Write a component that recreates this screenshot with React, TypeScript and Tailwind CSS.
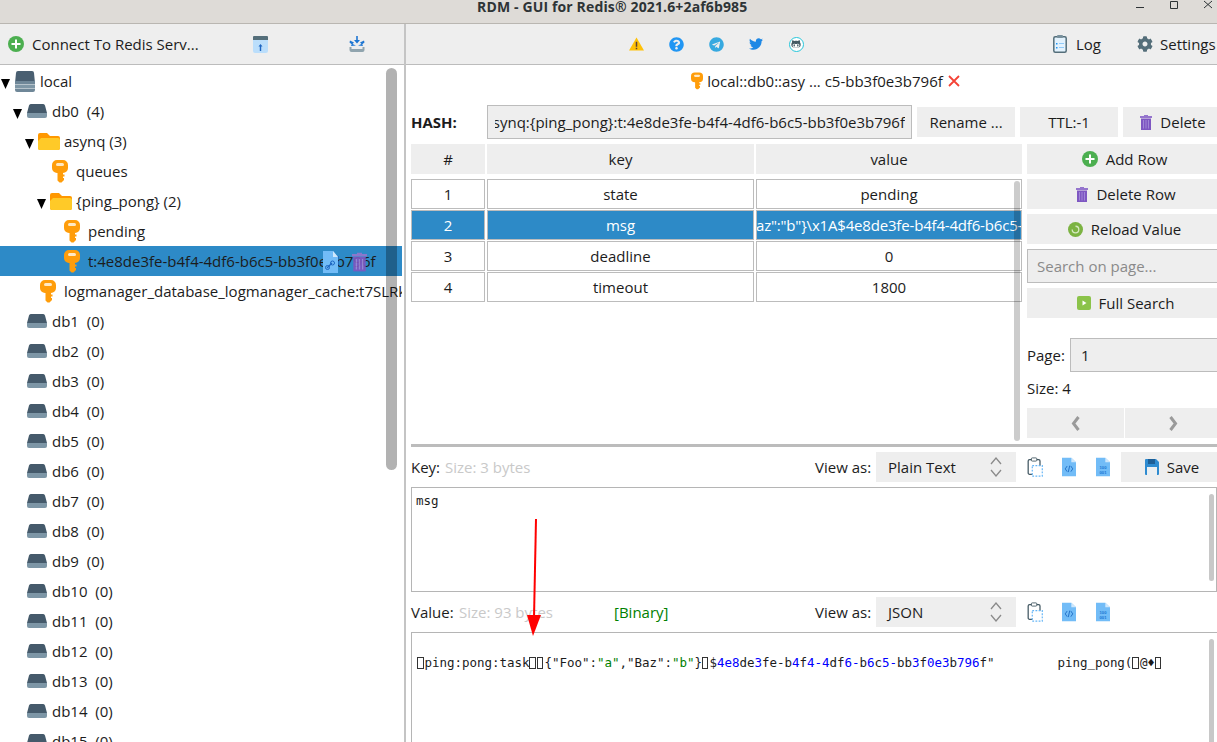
import React from 'react';
import { FaCog, FaGithubAlt, FaQuestionCircle, FaTelegram, FaTwitter } from 'react-icons/fa';

// ---- icons ----
const KeyIcon = ({ className = 'w-[16px] h-[23px]' }: { className?: string }) => (
    <svg viewBox="0 0 16 23" className={`shrink-0 ${className}`}>
        <path d="M5 0h6a5 5 0 0 1 5 5v3a5 5 0 0 1-5 5v1.5h1.5v2H11v1.5h1v2l-2.5 2.5h-2L5.5 20.5V13H5a5 5 0 0 1-5-5V5a5 5 0 0 1 5-5z" fill="#ff9d0a" />
        <rect x="4" y="3" width="8" height="3" rx="1.5" fill="#ffe9c4" />
    </svg>
);

const ServerIcon = () => (
    <svg viewBox="0 0 20 21" className="w-[20px] h-[21px] ml-[2px] shrink-0">
        <path d="M3 0h14a2 2 0 0 1 2 2l1 10H0L1 2a2 2 0 0 1 2-2z" fill="#4a5f71" />
        <rect x="0" y="10" width="20" height="3.5" fill="#6f8798" />
        <rect x="0" y="14" width="20" height="3" fill="#7f97a6" />
        <path d="M0 17.5h20V19a2 2 0 0 1-2 2H2a2 2 0 0 1-2-2z" fill="#6f8798" />
    </svg>
);

const DbIcon = () => (
    <svg viewBox="0 0 20 14" className="w-[20px] h-[14px] ml-[2px] shrink-0">
        <path d="M4 0h12a2 2 0 0 1 2 1.5L20 9H0l2-7.5A2 2 0 0 1 4 0z" fill="#455a6b" />
        <path d="M0 9h20v3a2 2 0 0 1-2 2H2a2 2 0 0 1-2-2z" fill="#7d96a6" />
    </svg>
);

const FolderIcon = () => (
    <svg viewBox="0 0 22 17" className="w-[22px] h-[17px] ml-[1px] shrink-0">
        <path d="M2 0h7l3 3h8a2 2 0 0 1 2 2v10a2 2 0 0 1-2 2H2a2 2 0 0 1-2-2V2a2 2 0 0 1 2-2z" fill="#ff9800" />
        <path d="M3 5h17a2 2 0 0 1 2 2v8a2 2 0 0 1-2 2H2a2 2 0 0 1-2-2V8z" fill="#ffca28" />
    </svg>
);

const AddIcon = () => (
    <svg viewBox="0 0 16 16" className="w-[16px] h-[16px] shrink-0">
        <circle cx="8" cy="8" r="8" fill="#4caf50" />
        <path d="M7 3.5h2V7h3.5v2H9v3.5H7V9H3.5V7H7z" fill="#fff" />
    </svg>
);

const TrashIcon = ({ className = 'w-[12px] h-[15px]' }: { className?: string }) => (
    <svg viewBox="0 0 12 15" className={`shrink-0 ${className}`}>
        <path d="M4 0h4v1h4v2H0V1h4z" fill="#9575cd" />
        <path d="M1 3.5h10V15H1z" fill="#7e57c2" />
        <path d="M3 5h1v8.500H3zM5.500 5h1v8.500h-1zM8 5h1v8.500H8z" fill="#9f86d6" />
    </svg>
);

const ImportIcon = () => (
    <svg viewBox="0 0 15 17" className="w-[15px] h-[17px]">
        <path d="M1 0h13a1 1 0 0 1 1 1v3H0V1a1 1 0 0 1 1-1z" fill="#546e7a" />
        <path d="M0 4h15v11a2 2 0 0 1-2 2H2a2 2 0 0 1-2-2z" fill="#bbdefb" />
        <path d="M7.500 8l2 2.500H8.200V15H6.800v-4.500H5.500z" fill="#1e66c2" />
    </svg>
);

const ExportIcon = () => (
    <svg viewBox="0 0 16 16" className="w-[16px] h-[16px]">
        <path d="M7.200 0h1.600v4H11L8 7.500 5 4h2.200z" fill="#1e76d2" />
        <path d="M1 4.500l4 2-1.500 1.500L7 9.500l-5 .6.700-1.800L.5 6.500zM15 4.500l-4 2 1.500 1.500L9 9.500l5 .6-.7-1.800 2.200-1.800z" fill="#1e76d2" />
        <path d="M.5 11h2v2h11v-2h2v3a2 2 0 0 1-2 2h-11a2 2 0 0 1-2-2z" fill="#90a4ae" />
    </svg>
);

const WarnIcon = () => (
    <svg viewBox="0 0 16 14" className="w-[15px] h-[14px]">
        <path d="M8 0l8 14H0z" fill="#ffc107" />
        <path d="M7.200 4.500h1.600V10H7.200zM7.200 11h1.600v1.500H7.200z" fill="#5d4037" />
    </svg>
);

const GithubIcon = () => (
    <div className="w-[15px] h-[15px] rounded-full border-[1.5px] border-[#26c6da] flex items-center justify-center bg-white">
        <FaGithubAlt className="w-[10px] h-[10px] text-[#455a64]" />
    </div>
);

const LogIcon = () => (
    <svg viewBox="0 0 14 18" className="w-[14px] h-[18px] shrink-0">
        <rect x="0.800" y="1.800" width="12.400" height="15.400" rx="1.500" fill="#e3f2fd" stroke="#546e7a" strokeWidth="1.500" />
        <rect x="4" y="0" width="6" height="3" rx="1" fill="#78909c" />
        <path d="M3 8h1.500v1.500H3zM3 12h1.500v1.500H3z" fill="#2196f3" />
        <path d="M6 8h5v1H6zM6 12h5v1H6z" fill="#90caf9" />
    </svg>
);

const ReloadIcon = () => (
    <svg viewBox="0 0 16 16" className="w-[15px] h-[15px] shrink-0">
        <circle cx="8" cy="8" r="8" fill="#7cb342" />
        <path d="M4.500 8a3.500 3.500 0 1 0 3.500-3.500" fill="none" stroke="#d7e9c0" strokeWidth="1.400" />
    </svg>
);

const PlayIcon = () => (
    <svg viewBox="0 0 14 14" className="w-[14px] h-[14px] shrink-0">
        <rect width="14" height="14" rx="2" fill="#8bc34a" />
        <path d="M5.500 4.500L9.500 7l-4 2.500z" fill="#fff" />
    </svg>
);

const SaveIcon = () => (
    <svg viewBox="0 0 14 16" className="w-[14px] h-[16px] shrink-0">
        <path d="M1 0h10l3 3v12a1 1 0 0 1-1 1H1a1 1 0 0 1-1-1V1a1 1 0 0 1 1-1z" fill="#2e8bd0" />
        <rect x="3" y="0" width="7" height="5" fill="#1e5f96" />
        <rect x="2" y="8" width="10" height="8" fill="#eceff1" />
    </svg>
);

const ClipboardIcon = () => (
    <svg viewBox="0 0 17 22" className="w-[16px] h-[20px]">
        <rect x="1" y="3" width="13" height="16" rx="1.500" fill="none" stroke="#455a64" strokeWidth="1.400" />
        <rect x="4.500" y="1" width="6" height="3.500" rx="1" fill="#fff" stroke="#455a64" />
        <rect x="5.500" y="9.500" width="11" height="11.500" fill="#fff" stroke="#64b5f6" strokeWidth="1.300" strokeDasharray="2 1.500" />
    </svg>
);

const PageIcon = ({ children }: { children: React.ReactNode }) => (
    <svg viewBox="0 0 15 20" className="w-[14px] h-[20px]">
        <path d="M0 0h10l5 5v15H0z" fill="#72bcf7" />
        <path d="M10 0l5 5h-5z" fill="#cfe8fc" />
        {children}
    </svg>
);

const FileLinkIcon = () => (
    <svg viewBox="0 0 15 22" className="w-[15px] h-[22px]">
        <path d="M0 0h10l5 6v16H0z" fill="#72bcf7" />
        <path d="M10 0l5 6h-5z" fill="#cfe8fc" />
        <path d="M4 17l5-5" stroke="#1e66c2" strokeWidth="1.200" />
        <circle cx="4.500" cy="16.500" r="2" fill="none" stroke="#1e66c2" />
        <circle cx="9.500" cy="12" r="2" fill="none" stroke="#1e66c2" />
    </svg>
);

const Chevron = ({ flip = false }: { flip?: boolean }) => (
    <svg viewBox="0 0 9 15" className={`w-[9px] h-[15px] ${flip ? 'rotate-180' : ''}`}>
        <path d="M7.500 1L2.500 7.500l5 6.500" fill="none" stroke="#9a9a9a" strokeWidth="3" />
    </svg>
);

const UpDown = () => (
    <svg viewBox="0 0 12 20" className="w-[12px] h-[20px] shrink-0">
        <path d="M1 7l5-6 5 6M1 13l5 6 5-6" fill="none" stroke="#8a8a8a" strokeWidth="1.300" />
    </svg>
);

// ---- tree ----
type Row = { label: string; depth: 0 | 1 | 2 | 3 | 4; icon: 'server' | 'db' | 'folder' | 'key'; open?: boolean; selected?: boolean };

const depthClass = ['pl-[1px]', 'pl-[13px]', 'pl-[25px]', 'pl-[37px]', 'pl-[49px]'];

const rows: Row[] = [
    { label: 'local', depth: 0, icon: 'server', open: true },
    { label: 'db0  (4)', depth: 1, icon: 'db', open: true },
    { label: 'asynq (3)', depth: 2, icon: 'folder', open: true },
    { label: 'queues', depth: 3, icon: 'key' },
    { label: '{ping_pong} (2)', depth: 3, icon: 'folder', open: true },
    { label: 'pending', depth: 4, icon: 'key' },
    { label: 't:4e8de3fe-b4f4-4df6-b6c5-bb3f0e3b796f', depth: 4, icon: 'key', selected: true },
    { label: 'logmanager_database_logmanager_cache:t7SLRkQwZp', depth: 2, icon: 'key' },
    ...Array.from({ length: 15 }, (_, i): Row => ({ label: `db${i + 1}  (0)`, depth: 1, icon: 'db' })),
];

const TreeRow = ({ row }: { row: Row }) => (
    <div className={`relative flex h-[30px] shrink-0 items-center overflow-hidden whitespace-pre ${depthClass[row.depth]} ${row.selected ? 'bg-[#2d8ac7]' : ''}`}>
        <div className="w-[12px] shrink-0 mt-[6px]">
            {row.open && (
                <svg viewBox="0 0 9 10" className="w-[9px] h-[10px]">
                    <path d="M0 0h9L4.500 10z" fill="#000" />
                </svg>
            )}
        </div>
        <div className="w-[27px] shrink-0 flex items-center">
            {row.icon === 'server' && <ServerIcon />}
            {row.icon === 'db' && <DbIcon />}
            {row.icon === 'folder' && <FolderIcon />}
            {row.icon === 'key' && <KeyIcon className="w-[16px] h-[23px] ml-[3px]" />}
        </div>
        <span>{row.label}</span>
        {row.selected && (
            <>
                <div className="absolute left-[323px] top-[5px]"><FileLinkIcon /></div>
                <div className="absolute left-[352px] top-[6px] opacity-90"><TrashIcon className="w-[15px] h-[20px]" /></div>
            </>
        )}
    </div>
);

// ---- right side pieces ----
const Btn = ({ className = '', icon, children }: { className?: string; icon?: React.ReactNode; children: React.ReactNode }) => (
    <div className={`flex items-center justify-center gap-[8px] bg-[#eeeeee] shrink-0 whitespace-nowrap ${className}`}>
        {icon}
        <span>{children}</span>
    </div>
);

const Cell = ({ className = '', children }: { className?: string; children: React.ReactNode }) => (
    <div className={`flex items-center justify-center border border-[#bcbcbc] h-[30px] overflow-hidden whitespace-nowrap ${className}`}>{children}</div>
);

const tableRows = [
    ['1', 'state', 'pending'],
    ['2', 'msg', ''],
    ['3', 'deadline', '0'],
    ['4', 'timeout', '1800'],
];

const FormatIcons = () => (
    <div className="flex items-center ml-[2px] shrink-0">
        <div className="w-[34px] flex justify-center shrink-0"><ClipboardIcon /></div>
        <div className="w-[34px] flex justify-center shrink-0">
            <PageIcon>
                <path d="M5.500 9L3.500 12l2 3M9.500 9l2 3-2 3M8.300 8.500L6.700 15.500" fill="none" stroke="#1565c0" strokeWidth="0.900" />
            </PageIcon>
        </div>
        <div className="w-[34px] flex justify-center shrink-0">
            <PageIcon>
                <text x="7.500" y="12" textAnchor="middle" fontSize="4.500" fontWeight="700" fill="#1976d2" fontFamily="Liberation Sans, sans-serif">100</text>
                <text x="7.500" y="17" textAnchor="middle" fontSize="4.500" fontWeight="700" fill="#1976d2" fontFamily="Liberation Sans, sans-serif">001</text>
            </PageIcon>
        </div>
    </div>
);

const ViewAs = ({ value }: { value: string }) => (
    <>
        <div className="w-[61px] shrink-0">View as:</div>
        <div className="w-[140px] h-[30px] shrink-0 bg-[#eeeeee] flex items-center justify-between pl-[12px] pr-[14px]">
            <span>{value}</span>
            <UpDown />
        </div>
    </>
);

const Tofu = () => (
    <span className="inline-block w-[6.500px] h-[12px] mr-[1px] border border-[#333] align-[-2px]" />
);

const blue = 'text-[#0000ff]';
const green = 'text-[#008000]';

const idParts: [string, string][] = [
    ['4e8', blue], ['de', ''], ['3', blue], ['fe-b', ''], ['4', blue], ['f', ''], ['4-4', blue], ['df', ''],
    ['6-', blue], ['b', ''], ['6', blue], ['c', ''], ['5-', blue], ['bb', ''], ['3', blue], ['f', ''],
    ['0e3', blue], ['b', ''], ['796', blue], ['f"', ''],
];

const App: React.FC = () => {
    return (
        <div className="relative w-[1217px] h-[742px] overflow-hidden flex flex-col bg-white text-[#1c1c1c] text-[15px] leading-[20px] font-['Open_Sans',sans-serif]">
            {/* title bar */}
            <div className="h-[24px] shrink-0 flex items-start justify-between bg-[#dedbd7] border-b border-[#b9b6b1]">
                <div className="pl-[477px] text-[14px] leading-[13px] tracking-[0.140px] font-bold text-[#2e3436] whitespace-nowrap">RDM - GUI for Redis® 2021.6+2af6b985</div>
                <div className="flex items-start text-[#2e3436]">
                    <svg viewBox="0 0 8 10" className="w-[8px] h-[10px]"><path d="M0 7h8v1H0z" fill="#2e3436" /></svg>
                    <svg viewBox="0 0 8 10" className="w-[8px] h-[10px] ml-[26px]"><path d="M.5 1.500h7v7h-7z" fill="none" stroke="#2e3436" /></svg>
                    <svg viewBox="0 0 8 10" className="w-[8px] h-[10px] ml-[26px] mr-[5px]"><path d="M0 1l8 7M8 1L0 8" fill="none" stroke="#2e3436" /></svg>
                </div>
            </div>

            <div className="flex flex-1 min-h-0">
                {/* left panel */}
                <div className="w-[404px] shrink-0 flex flex-col">
                    <div className="h-[41px] shrink-0 flex items-center bg-[#eeeeee] border-b border-[#bcbcbc]">
                        <div className="w-[211px] flex items-center gap-[8px] pl-[8px] whitespace-nowrap">
                            <AddIcon />
                            <span>Connect To Redis Serv...</span>
                        </div>
                        <div className="w-[98px] flex justify-center"><ImportIcon /></div>
                        <div className="w-[95px] flex justify-center"><ExportIcon /></div>
                    </div>
                    <div className="relative flex-1 min-h-0 overflow-hidden pr-[2px] pt-[1px]">
                        {rows.map((row) => (
                            <TreeRow key={row.label} row={row} />
                        ))}
                        <div className="absolute left-[386px] top-[3px] w-[11px] h-[402px] rounded-full bg-black/30" />
                    </div>
                </div>

                {/* right panel */}
                <div className="flex-1 min-w-0 flex flex-col border-l-2 border-[#c4c4c4] overflow-hidden">
                    <div className="h-[41px] shrink-0 flex items-center bg-[#eeeeee] border-b border-[#bcbcbc] whitespace-nowrap">
                        <div className="w-[210px] shrink-0" />
                        <div className="w-[40px] flex justify-center shrink-0"><WarnIcon /></div>
                        <div className="w-[40px] flex justify-center shrink-0"><FaQuestionCircle className="w-[15px] h-[15px] text-[#2196f3]" /></div>
                        <div className="w-[40px] flex justify-center shrink-0"><FaTelegram className="w-[15px] h-[15px] text-[#37a9e0]" /></div>
                        <div className="w-[40px] flex justify-center shrink-0"><FaTwitter className="w-[14px] h-[14px] text-[#1e88e5]" /></div>
                        <div className="w-[40px] flex justify-center shrink-0"><GithubIcon /></div>
                        <div className="w-[237px] shrink-0" />
                        <div className="w-[84px] shrink-0 flex items-center gap-[9px]">
                            <LogIcon />
                            <span>Log</span>
                        </div>
                        <div className="flex items-center gap-[7px]">
                            <FaCog className="w-[16px] h-[16px] text-[#546e7a]" />
                            <span>Settings</span>
                        </div>
                    </div>

                    <div className="h-[32px] shrink-0 flex items-center justify-center pl-[28px] gap-[4px] whitespace-nowrap">
                        <KeyIcon className="w-[12px] h-[18px]" />
                        <span>local::db0::asy ... c5-bb3f0e3b796f</span>
                        <svg viewBox="0 0 12 12" className="w-[12px] h-[12px] ml-[1px]">
                            <path d="M1 1l10 10M11 1L1 11" stroke="#f44336" strokeWidth="1.800" />
                        </svg>
                    </div>

                    <div className="mt-[8px] h-[34px] shrink-0 flex items-center pl-[5px]">
                        <div className="w-[76px] shrink-0 font-bold">HASH:</div>
                        <div className="w-[425px] h-[34px] shrink-0 bg-[#eeeeee] border border-[#bcbcbc] pl-[7px] pr-[6px]">
                            <div className="h-full flex items-center justify-end overflow-hidden whitespace-nowrap">
                                <span>asynq:{'{'}ping_pong{'}'}:t:4e8de3fe-b4f4-4df6-b6c5-bb3f0e3b796f</span>
                            </div>
                        </div>
                        <Btn className="w-[98px] h-[30px] ml-[5px]">Rename ...</Btn>
                        <Btn className="w-[98px] h-[30px] ml-[5px]">TTL:-1</Btn>
                        <Btn className="w-[100px] h-[30px] ml-[5px]" icon={<TrashIcon />}>Delete</Btn>
                    </div>

                    {/* table + side actions */}
                    <div className="relative mt-[5px] h-[300px] shrink-0 flex pl-[5px] gap-[5px]">
                        <div className="w-[611px] shrink-0 flex flex-col">
                            <div className="flex h-[30px] gap-[2px] mb-[5px]">
                                <Btn className="w-[74px]">#</Btn>
                                <Btn className="w-[267px]">key</Btn>
                                <Btn className="w-[266px]">value</Btn>
                            </div>
                            <div className="flex flex-col gap-[1px]">
                                {tableRows.map((r) => {
                                    const sel = r[0] === '2';
                                    const tone = sel ? 'bg-[#2d8ac7] text-white border-[#b5c9d6]' : '';
                                    return (
                                        <div key={r[0]} className="flex gap-[2px]">
                                            <Cell className={`w-[74px] ${tone}`}>{r[0]}</Cell>
                                            <Cell className={`w-[267px] ${tone}`}>{r[1]}</Cell>
                                            <Cell className={`w-[266px] ${sel ? `${tone} !justify-start` : ''}`}>
                                                {sel ? <span className="-ml-[1px] tracking-[-0.180px]">az":"b"{'}'}\x1A$4e8de3fe-b4f4-4df6-b6c5-bb3f0e3b796f</span> : r[2]}
                                            </Cell>
                                        </div>
                                    );
                                })}
                            </div>
                        </div>
                        <div className="absolute left-[608px] top-[37px] w-[6px] h-[260px] rounded-full bg-black/20" />

                        <div className="w-[195px] shrink-0 flex flex-col">
                            <Btn className="h-[30px]" icon={<AddIcon />}>Add Row</Btn>
                            <Btn className="h-[30px] mt-[5px] pl-[3px]" icon={<TrashIcon />}>Delete Row</Btn>
                            <Btn className="h-[30px] mt-[5px]" icon={<ReloadIcon />}>Reload Value</Btn>
                            <div className="h-[34px] mt-[5px] shrink-0 flex items-center pl-[9px] bg-[#eeeeee] border border-[#bcbcbc] text-[#8a8a8a]">Search on page...</div>
                            <Btn className="h-[30px] mt-[5px] pl-[2px]" icon={<PlayIcon />}>Full Search</Btn>
                            <div className="flex items-center mt-[20px] h-[34px]">
                                <div className="w-[43px] shrink-0">Page:</div>
                                <div className="flex-1 h-[34px] flex items-center pl-[10px] bg-[#eeeeee] border border-[#bcbcbc]">1</div>
                            </div>
                            <div className="mt-[6px] h-[20px]">Size: 4</div>
                            <div className="flex gap-[1px] mt-[10px]">
                                <div className="w-[97px] h-[30px] flex items-center justify-center bg-[#eeeeee]"><Chevron /></div>
                                <div className="w-[97px] h-[30px] flex items-center justify-center bg-[#eeeeee]"><Chevron flip /></div>
                            </div>
                        </div>
                    </div>

                    <div className="ml-[5px] h-[3px] shrink-0 bg-[#bcbcbc]" />

                    {/* key viewer */}
                    <div className="h-[40px] shrink-0 flex items-center pl-[5px] whitespace-nowrap">
                        <div className="w-[404px] shrink-0">
                            Key: <span className="ml-[1px] text-[#c9c9c9]">Size: 3 bytes</span>
                        </div>
                        <ViewAs value="Plain Text" />
                        <FormatIcons />
                        <Btn className="w-[102px] h-[30px] ml-[1px]" icon={<SaveIcon />}>Save</Btn>
                    </div>
                    <div className="relative ml-[5px] h-[105px] shrink-0 border border-[#b5b5b5] pl-[4px] pt-[5px] font-['DejaVu_Sans_Mono',monospace] text-[12.500px] leading-[16px] tracking-[-0.030px]">
                        msg
                        <div className="absolute left-[797px] top-[6px] w-[5px] h-[87px] rounded-full bg-[#c8c8c8]" />
                    </div>

                    {/* value viewer */}
                    <div className="h-[40px] shrink-0 flex items-center pl-[5px] whitespace-nowrap">
                        <div className="w-[48px] shrink-0">Value:</div>
                        <div className="w-[155px] shrink-0 text-[#c9c9c9]">Size: 93 bytes</div>
                        <div className="w-[201px] shrink-0 text-[#008000]">[Binary]</div>
                        <ViewAs value="JSON" />
                        <FormatIcons />
                    </div>
                    <div className="relative ml-[5px] flex-1 min-h-0 border-t border-l border-[#b5b5b5] pl-[5px] pt-[22px] font-['DejaVu_Sans_Mono',monospace] text-[12.500px] leading-[16px] tracking-[-0.030px] whitespace-nowrap overflow-hidden">
                        <Tofu />ping:pong:task<Tofu /><Tofu />{'{"Foo":'}<span className={green}>"a"</span>,"Baz":<span className={green}>"b"</span>{'}'}<Tofu />$
                        {idParts.map(([text, color], i) => (
                            <span key={i} className={color}>{text}</span>
                        ))}
                        <span className="inline-block w-[63px]" />ping_pong(<Tofu />@♦<Tofu />
                        <div className="absolute left-[797px] top-[6px] w-[5px] h-[120px] rounded-full bg-[#c8c8c8]" />
                    </div>
                </div>
            </div>

            {/* red annotation arrow drawn over the screenshot */}
            <svg viewBox="0 0 20 120" className="absolute left-[525px] top-[518px] w-[20px] h-[120px] pointer-events-none">
                <path d="M11 1L9 100" stroke="#ff0000" strokeWidth="2" fill="none" />
                <path d="M2 97h14L8 118z" fill="#ff0000" />
            </svg>
        </div>
    );
};

export default App;
